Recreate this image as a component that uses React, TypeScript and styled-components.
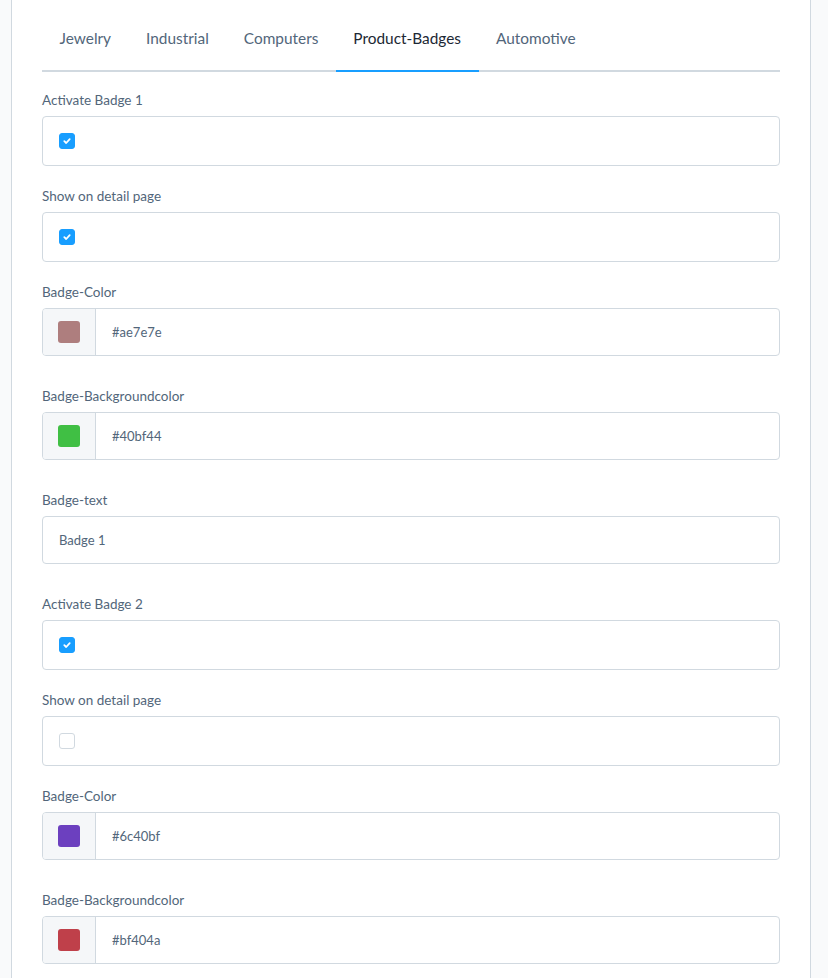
import React from "react";
import styled, { createGlobalStyle } from "styled-components";

const Global = createGlobalStyle`
  html, body { margin: 0; padding: 0; }
  body {
    background: #f9fafb;
    font-family: "Lato", "Liberation Sans", sans-serif;
    -webkit-font-smoothing: antialiased;
  }
`;

const Page = styled.div`
  padding-left: 11px;
  min-height: 978px;
  box-sizing: border-box;
`;

const Card = styled.div`
  width: 800px;
  min-height: 978px;
  box-sizing: border-box;
  background: #fff;
  border-left: 1px solid #d1d9e0;
  border-right: 1px solid #d1d9e0;
  padding: 20px 30px 0;
`;

const TabList = styled.div`
  display: flex;
  border-bottom: 2px solid #d1d9e0;
  margin-bottom: 20px;
`;

const Tab = styled.div<{ $active?: boolean }>`
  padding: 8px 17.5px 22px;
  font-size: 15.4px;
  line-height: 20px;
  color: ${(p) => (p.$active ? "#1c2834" : "#52667a")};
  border-bottom: 2px solid ${(p) => (p.$active ? "#189eff" : "transparent")};
  margin-bottom: -2px;
  cursor: pointer;
`;

const Field = styled.div<{ $gap: number }>`
  display: flex;
  flex-direction: column;
  margin-bottom: ${(p) => p.$gap}px;
`;

const Label = styled.label`
  font-size: 13.5px;
  line-height: 16px;
  color: #52667a;
  margin-bottom: 8px;
`;

const Box = styled.div<{ $h: number }>`
  height: ${(p) => p.$h}px;
  box-sizing: border-box;
  border: 1px solid #d1d9e0;
  border-radius: 4px;
  background: #fff;
  display: flex;
  align-items: center;
  overflow: hidden;
`;

const CheckCell = styled.div`
  padding-left: 16px;
  display: flex;
  align-items: center;
`;

const Check = styled.span<{ $on: boolean }>`
  width: 16px;
  height: 16px;
  box-sizing: border-box;
  border-radius: 3px;
  display: inline-flex;
  align-items: center;
  justify-content: center;
  background: ${(p) => (p.$on ? "#189eff" : "#fff")};
  border: 1px solid ${(p) => (p.$on ? "#189eff" : "#d1d9e0")};
`;

const SwatchCell = styled.div`
  width: 52px;
  height: 100%;
  flex: none;
  background: #f5f7f9;
  border-right: 1px solid #d1d9e0;
  display: flex;
  align-items: center;
  justify-content: center;
`;

const Swatch = styled.span<{ $color: string }>`
  width: 22px;
  height: 22px;
  border-radius: 3px;
  background: ${(p) => p.$color};
`;

const Value = styled.span`
  font-size: 13px;
  color: #52667a;
  padding-left: 16px;
`;

const CheckMark = () => (
  <svg width="10" height="10" viewBox="0 0 10 10">
    <path
      d="M2.3 5.2 L4.2 7 L7.7 3.2"
      fill="none"
      stroke="#fff"
      strokeWidth="1.8"
      strokeLinecap="round"
      strokeLinejoin="round"
    />
  </svg>
);

const CheckField = ({ label, on }: { label: string; on: boolean }) => (
  <Field $gap={22}>
    <Label>{label}</Label>
    <Box $h={50}>
      <CheckCell>
        <Check $on={on}>{on && <CheckMark />}</Check>
      </CheckCell>
    </Box>
  </Field>
);

const ColorField = ({ label, color }: { label: string; color: string }) => (
  <Field $gap={32}>
    <Label>{label}</Label>
    <Box $h={48}>
      <SwatchCell>
        <Swatch $color={color} />
      </SwatchCell>
      <Value>{color}</Value>
    </Box>
  </Field>
);

const TextField = ({ label, value }: { label: string; value: string }) => (
  <Field $gap={32}>
    <Label>{label}</Label>
    <Box $h={48}>
      <Value>{value}</Value>
    </Box>
  </Field>
);

const tabs = ["Jewelry", "Industrial", "Computers", "Product-Badges", "Automotive"];

export default function App() {
  return (
    <>
      <Global />
      <Page>
        <Card>
          <TabList>
            {tabs.map((t) => (
              <Tab key={t} $active={t === "Product-Badges"}>
                {t}
              </Tab>
            ))}
          </TabList>
          <CheckField label="Activate Badge 1" on />
          <CheckField label="Show on detail page" on />
          <ColorField label="Badge-Color" color="#ae7e7e" />
          <ColorField label="Badge-Backgroundcolor" color="#40bf44" />
          <TextField label="Badge-text" value="Badge 1" />
          <CheckField label="Activate Badge 2" on />
          <CheckField label="Show on detail page" on={false} />
          <ColorField label="Badge-Color" color="#6c40bf" />
          <ColorField label="Badge-Backgroundcolor" color="#bf404a" />
        </Card>
      </Page>
    </>
  );
}
